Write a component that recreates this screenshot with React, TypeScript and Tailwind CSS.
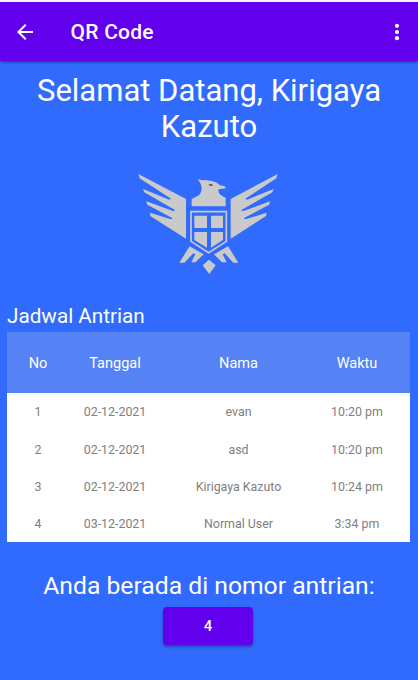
import React from "react";

type Entry = { no: number; date: string; name: string; time: string };

const entries: Entry[] = [
  { no: 1, date: "02-12-2021", name: "evan", time: "10:20 pm" },
  { no: 2, date: "02-12-2021", name: "asd", time: "10:20 pm" },
  { no: 3, date: "02-12-2021", name: "Kirigaya Kazuto", time: "10:24 pm" },
  { no: 4, date: "03-12-2021", name: "Normal User", time: "3:34 pm" },
];

function AppBar() {
  return (
    <header className="relative flex h-[61px] items-center border-t-2 border-[#f5f5fa] bg-[#6200ee] pt-px shadow-[0_1px_3px_rgba(0,0,0,0.5)]">
      <svg className="-mt-px ml-[13px] h-[24px] w-[24px]" viewBox="0 0 24 24" fill="#fff">
        <path d="M20 11H7.83l5.59-5.59L12 4l-8 8 8 8 1.41-1.41L7.83 13H20v-2z" />
      </svg>
      <h1 className="ml-[33.5px] text-[21px] font-medium leading-6 tracking-[0.25px]">QR Code</h1>
      <svg className="-mt-px mr-[9px] ml-auto h-[24px] w-[24px]" viewBox="0 0 24 24" fill="#fff">
        <circle cx="12" cy="5.8" r="2.1" />
        <circle cx="12" cy="12" r="2.1" />
        <circle cx="12" cy="18.2" r="2.1" />
      </svg>
    </header>
  );
}

function EagleCrest() {
  return (
    <svg className="mx-auto h-[115px] w-[155px]" viewBox="0 0 465 345" fill="#cacaca">
      <path d="M25 27 L168 102 V221 L61 153 L60 143 L123 163 L128 160 L52 119 L49 109 L131 139 L135 135 L43 82 L39 72 L118 104 L123 101 L29 40 Z" />
      <path d="M443 27 L302 102 V221 L408 153 L410 143 L346 163 L341 160 L417 119 L420 109 L338 139 L334 135 L427 82 L431 72 L351 104 L346 101 L439 40 Z" />
      <path d="M202 43 C218 47 230 45 240 47 C256 48 265 56 270 61 L284 64 L288 70 L266 73 C263 82 269 92 287 98 V124 H185 V102 L207 91 C218 78 219 59 202 43 Z" />
      <path d="M236 57 L249 59 L245 63 L238 61 Z" fill="#303438" />
      <path d="M183 140 H289 V229 L236 263 L183 229 Z" fill="none" stroke="#cacaca" strokeWidth="5" />
      <path d="M193 152 H231 V189 H193 Z M243 152 H279 V189 H243 Z M193 201 H231 V248 L193 225 Z M243 201 H279 V225 L243 248 Z" />
      <path d="M179 244 L221 268 L196 292 H184 L196 268 L190 265 L163 293 H148 Z" />
      <path d="M294 244 L252 268 L276 292 H290 L278 268 L284 265 L310 293 H325 Z" />
      <path d="M237 284 L257 301 L238 327 L218 301 Z" />
    </svg>
  );
}

export default function App() {
  return (
    <div className="flex h-[680px] w-[418px] flex-col overflow-hidden bg-[#316bfd] font-[Roboto,sans-serif] text-white">
      <AppBar />
      <main className="flex flex-col">
        <h2 className="mt-[12px] px-6 text-center text-[31px] leading-[36px]">
          Selamat Datang, Kirigaya
          <br />
          Kazuto
        </h2>
        <div className="mt-[20px] pr-[3px]">
          <EagleCrest />
        </div>
        <h3 className="mt-[23px] ml-[7px] text-[20.7px] leading-[26px]">Jadwal Antrian</h3>
        <table className="mt-[2.5px] ml-[7px] w-[403px] table-fixed border-collapse text-center">
          <colgroup>
            <col className="w-[62px]" />
            <col className="w-[92px]" />
            <col className="w-[155px]" />
            <col className="w-[94px]" />
          </colgroup>
          <thead>
            <tr className="h-[61.5px] bg-[#5582f5] text-[14.5px]">
              <th className="p-0 pt-[3px] font-normal">No</th>
              <th className="p-0 pt-[3px] font-normal">Tanggal</th>
              <th className="p-0 pt-[3px] font-normal">Nama</th>
              <th className="p-0 pt-[3px] pr-[12px] font-normal">Waktu</th>
            </tr>
          </thead>
          <tbody className="bg-white text-[12.4px] text-[#808080]">
            {entries.map((entry) => (
              <tr key={entry.no} className="h-[37.25px]">
                <td className="p-0 pt-[2px]">{entry.no}</td>
                <td className="p-0 pt-[2px]">{entry.date}</td>
                <td className="p-0 pt-[2px]">{entry.name}</td>
                <td className="p-0 pt-[2px] pr-[12px]">{entry.time}</td>
              </tr>
            ))}
          </tbody>
        </table>
        <p className="mt-[29px] text-center text-[24.7px] leading-[30px]">
          Anda berada di nomor antrian:
        </p>
        <button className="ml-[163px] mt-[6px] h-[38px] w-[90px] rounded-[4px] bg-[#6200ee] text-[15px] font-medium shadow-[0_2px_3px_rgba(0,0,0,0.35)]">
          4
        </button>
      </main>
    </div>
  );
}
